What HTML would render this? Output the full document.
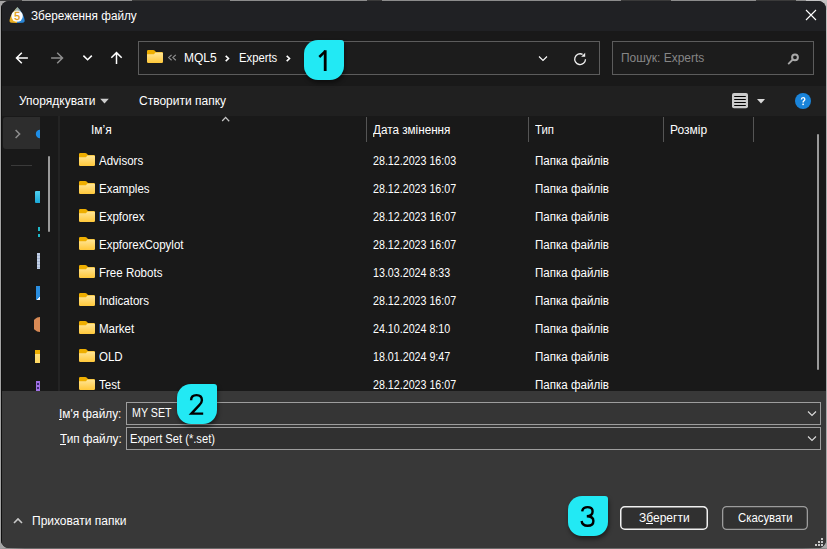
<!DOCTYPE html>
<html><head><meta charset="utf-8">
<style>
*{margin:0;padding:0;box-sizing:border-box}
html,body{width:827px;height:549px;overflow:hidden;background:#a5a5a5}
body{position:relative;font-family:"Liberation Sans",sans-serif;font-size:12px;color:#fff}
.a{position:absolute;display:block}
.t{position:absolute;white-space:nowrap;line-height:12px;transform-origin:0 0}
#win{position:absolute;left:0;top:0;width:827px;height:549px;clip-path:inset(1px 1px 1px 1px round 8px);background:#191919}
.badge{position:absolute;width:40px;height:40px;background:#22e9f4;border-radius:14px 3px 14px 14px;box-shadow:1px 3px 4px rgba(0,0,0,.45);color:#000;font-size:29px;line-height:40px;text-align:center;font-family:"Liberation Sans",sans-serif}
</style></head><body>
<svg width="0" height="0" style="position:absolute"><defs>
<linearGradient id="fg" x1="0" y1="0" x2="0" y2="1"><stop offset="0" stop-color="#ffe596"/><stop offset="1" stop-color="#ffc83a"/></linearGradient>
</defs></svg>
<div class="a" style="left:0;top:0;width:1px;height:549px;background:#a4a4a4"></div>
<div class="a" style="left:826px;top:0;width:1px;height:549px;background:linear-gradient(#c8c8c8,#b0b0b0 60px,#a8a8a8 300px,#a8a8a8)"></div>
<div class="a" style="left:0;top:548px;width:827px;height:1px;background:linear-gradient(90deg,#a0a0a0,#6a6a6a 3%,#6a6a6a 97%,#909090)"></div>
<div class="a" style="left:0;top:0;width:827px;height:1px;background:linear-gradient(90deg,#8c8c8c 0,#8c8c8c 0.00%,#3a3a3a 0.00%,#3a3a3a 2.66%,#8c8c8c 2.66%,#8c8c8c 15.96%,#3a3a3a 15.96%,#3a3a3a 27.81%,#8c8c8c 27.81%,#8c8c8c 44.38%,#3a3a3a 44.38%,#3a3a3a 46.19%,#8c8c8c 46.19%,#8c8c8c 75.09%,#3a3a3a 75.09%,#3a3a3a 81.14%,#8c8c8c 81.14%,#8c8c8c 91.41%,#3a3a3a 91.41%,#3a3a3a 96.25%,#8c8c8c 96.25%,#8c8c8c 100%)"></div>
<div class="a" style="left:806px;top:0;width:21px;height:10px;background:linear-gradient(#c4c4c4,#b4b4b4)"></div>
<div id="win">
<div class="a" style="left:0;top:0;width:827px;height:31px;background:#202124"></div>
<div class="a" style="left:0;top:31px;width:827px;height:55px;background:#191919"></div>
<div class="a" style="left:0;top:86px;width:827px;height:30px;background:#202020"></div>
<div class="a" style="left:0;top:116px;width:827px;height:275px;background:#191919"></div>
<div class="a" style="left:0;top:391px;width:827px;height:158px;background:#383838"></div>
<div class="a" style="left:1px;top:0;width:1px;height:549px;background:#0f0f0f"></div>
<svg class="a" style="left:6px;top:4px" width="22" height="22" viewBox="0 0 22 22">
<path d="M11.4 3.2 Q17.5 9 18.6 16 Q19 18.6 16.5 18.7 L11 18.9 Z" fill="#2a86d6"/>
<path d="M11.4 3.2 Q5 9 3.6 16 Q3.2 18.6 5.5 18.7 L11 18.9 Z" fill="#e9ae22"/>
<path d="M11.4 3 Q9 5.5 7.8 8 L15 8 Q13.8 5.5 11.4 3 Z" fill="#9fb2aa"/>
<circle cx="11.1" cy="12.1" r="5.7" fill="#fbfbfb"/>
<text x="11.1" y="15.7" font-family="Liberation Sans" font-size="10.5" fill="#e39c12" stroke="#e39c12" stroke-width="0.35" text-anchor="middle">5</text>
</svg>
<div class="t" style="left:31px;top:10px;color:#fff;font-size:12px;transform:scaleX(0.98);">Збереження файлу</div>
<svg class="a" style="left:805px;top:9px" width="12" height="12" viewBox="0 0 12 12"><path d="M1 1L11 11M11 1L1 11" stroke="#fff" stroke-width="1.1"/></svg>
<svg class="a" style="left:14px;top:50px" width="16" height="16" viewBox="0 0 16 16"><path d="M2.4 8H13.9M7.8 2.8L2.5 8L7.8 13.2" stroke="#fff" stroke-width="1.5" fill="none"/></svg>
<svg class="a" style="left:49px;top:50px" width="16" height="16" viewBox="0 0 16 16"><path d="M2.1 8H13.6M8.2 2.8L13.5 8L8.2 13.2" stroke="#8e8e8e" stroke-width="1.5" fill="none"/></svg>
<svg class="a" style="left:81px;top:52px" width="12" height="12" viewBox="0 0 12 12"><path d="M2.4 3.6L6.6 7.8L10.8 3.6" stroke="#fff" stroke-width="1.5" fill="none"/></svg>
<svg class="a" style="left:108px;top:50px" width="16" height="16" viewBox="0 0 16 16"><path d="M8.5 2.6V14M3.3 7.8L8.5 2.6L13.7 7.8" stroke="#fff" stroke-width="1.5" fill="none"/></svg>
<div class="a" style="left:138px;top:41px;width:462px;height:34px;border:1px solid #5c5c5c;background:#1c1c1c"></div>
<svg class="a" style="left:147px;top:50px" width="16" height="13" viewBox="0 0 16 13"><path d="M0 1.2Q0 0 1.2 0H6.3Q7 0 7.6 0.6L9 2H14.8Q16 2 16 3.2V8H0Z" fill="#eeae00"/><path d="M0 4.3H7L8.4 2.6H14.8Q16 2.6 16 3.8V11.8Q16 13 14.8 13H1.2Q0 13 0 11.8Z" fill="url(#fg)"/></svg>
<svg class="a" style="left:167px;top:53px" width="10" height="8" viewBox="0 0 10 8"><path d="M4.6 1.9L1.7 4.6L4.6 7.3M8.8 1.9L5.9 4.6L8.8 7.3" stroke="#909090" stroke-width="1.2" fill="none"/></svg>
<div class="t" style="left:184px;top:52px;color:#fff;font-size:12px;">MQL5</div>
<svg class="a" style="left:224px;top:53px" width="8" height="10" viewBox="0 0 8 10"><path d="M1.7 2.8L4.5 5.5L1.7 8.2" stroke="#fff" stroke-width="1.6" fill="none"/></svg>
<div class="t" style="left:239px;top:52px;color:#fff;font-size:12px;transform:scaleX(0.94);">Experts</div>
<svg class="a" style="left:285px;top:53px" width="8" height="10" viewBox="0 0 8 10"><path d="M1.7 2.8L4.5 5.5L1.7 8.2" stroke="#fff" stroke-width="1.6" fill="none"/></svg>
<svg class="a" style="left:537px;top:54px" width="12" height="10" viewBox="0 0 12 10"><path d="M2 2.5L6 6.5L10 2.5" stroke="#fff" stroke-width="1.1" fill="none"/></svg>
<svg class="a" style="left:572px;top:51px" width="16" height="16" viewBox="0 0 16 16"><path d="M13.5 8.3A5.4 5.4 0 1 1 10.6 3.4" stroke="#f0f0f0" stroke-width="1.3" fill="none"/><path d="M13.2 1.8V5.8H9.2Z" fill="#f0f0f0"/></svg>
<div class="a" style="left:612px;top:41px;width:202px;height:34px;border:1px solid #5c5c5c;background:#1c1c1c"></div>
<div class="t" style="left:621px;top:52px;color:#868686;font-size:12px;transform:scaleX(0.997);">Пошук: Experts</div>
<svg class="a" style="left:786px;top:51px" width="14" height="14" viewBox="0 0 14 14"><circle cx="9" cy="6.3" r="2.9" stroke="#a8a8a8" stroke-width="2" fill="none"/><path d="M6.8 8.5L2.2 13.1" stroke="#a8a8a8" stroke-width="1.8"/></svg>
<div class="t" style="left:19px;top:95px;color:#fff;font-size:12px;">Упорядкувати</div>
<svg class="a" style="left:99px;top:97px" width="11" height="8" viewBox="0 0 11 8"><path d="M1.2 1.8H9.8L5.5 6.6Z" fill="#cdcdcd"/></svg>
<div class="t" style="left:139px;top:95px;color:#fff;font-size:12px;">Створити папку</div>
<svg class="a" style="left:732px;top:93px" width="16" height="16" viewBox="0 0 16 16"><rect x="0" y="0" width="16" height="15.3" rx="2" fill="#cacaca"/><path d="M2.2 3.5H13.8M2.2 6.5H13.8M2.2 9.5H13.8M2.2 12.5H13.8" stroke="#000" stroke-width="1.2"/></svg>
<svg class="a" style="left:756px;top:97px" width="10" height="8" viewBox="0 0 10 8"><path d="M1 2H9L5 6.5Z" fill="#d8d8d8"/></svg>
<svg class="a" style="left:795px;top:93px" width="16" height="16" viewBox="0 0 16 16"><circle cx="8" cy="8" r="8" fill="#1a84da"/><path d="M6.4 6.4Q6.4 4.6 8.1 4.6Q9.8 4.6 9.8 6.2Q9.8 7.3 8.8 7.9Q8.1 8.4 8.1 9.6" stroke="#fff" stroke-width="1.4" fill="none"/><rect x="7.3" y="10.6" width="1.6" height="1.5" fill="#fff"/></svg>
<div class="a" style="left:3px;top:117px;width:37px;height:32px;background:#2d2d2d;border-radius:3px 0 0 3px"></div>
<svg class="a" style="left:13px;top:128px" width="10" height="12" viewBox="0 0 10 12"><path d="M2.6 2L6.6 6L2.6 10" stroke="#8e8e8e" stroke-width="1.5" fill="none"/></svg>
<svg class="a" style="left:34px;top:129px" width="6" height="10" viewBox="0 0 6 10"><circle cx="6" cy="5" r="4.2" fill="#1e8ee6"/></svg>
<div class="a" style="left:11px;top:165px;width:21px;height:1px;background:#3a3a3a"></div>
<div class="a" style="left:48px;top:156px;width:2px;height:76px;background:#9a9a9a;border-radius:1px"></div>
<div class="a" style="left:58px;top:116px;width:2px;height:275px;background:#232323"></div>
<div class="a" style="left:35px;top:191px;width:5px;height:12px;background:linear-gradient(#4fd0f0,#1aa8d8);border-radius:1px 0 0 1px"></div>
<div class="a" style="left:38px;top:227px;width:2px;height:4px;background:#1fb8c8"></div>
<div class="a" style="left:38px;top:234px;width:2px;height:3px;background:#1fb8c8"></div>
<div class="a" style="left:37px;top:253px;width:3px;height:16px;background:repeating-linear-gradient(#c0cee4 0,#c0cee4 2px,#a4b4d0 2px,#a4b4d0 3px)"></div>
<div class="a" style="left:36px;top:286px;width:4px;height:14px;background:linear-gradient(135deg,#2a8ee0 0,#2a8ee0 80%,#e8f0f8 80%)"></div>
<svg class="a" style="left:34px;top:317px" width="6" height="15" viewBox="0 0 6 15"><path d="M6 0A7.5 7.5 0 0 0 6 15Z" fill="#d88a55"/></svg>
<div class="a" style="left:35px;top:350px;width:5px;height:13px;background:linear-gradient(#f0b000 0,#f0b000 30%,#ffe080 30%,#ffd860)"></div>
<div class="a" style="left:36px;top:381px;width:4px;height:10px;background:#a070e4"></div>
<div class="a" style="left:37px;top:383px;width:2px;height:2px;background:#3a2a70"></div>
<div class="a" style="left:37px;top:387px;width:2px;height:2px;background:#3a2a70"></div>
<div class="t" style="left:91px;top:124px;color:#fff;font-size:12px;">Ім’я</div>
<svg class="a" style="left:220px;top:115px" width="12" height="8" viewBox="0 0 12 8"><path d="M2.2 6L5.6 2.4L9.2 6.2" stroke="#c4c4c4" stroke-width="1.3" fill="none"/></svg>
<div class="a" style="left:366px;top:117px;width:1px;height:25px;background:#555"></div>
<div class="a" style="left:528px;top:117px;width:1px;height:25px;background:#555"></div>
<div class="a" style="left:663px;top:117px;width:1px;height:25px;background:#555"></div>
<div class="a" style="left:753px;top:117px;width:1px;height:25px;background:#555"></div>
<div class="t" style="left:373px;top:124px;color:#fff;font-size:12px;transform:scaleX(0.975);">Дата змінення</div>
<div class="t" style="left:535px;top:124px;color:#fff;font-size:12px;transform:scaleX(0.95);">Тип</div>
<div class="t" style="left:670px;top:124px;color:#fff;font-size:12px;">Розмір</div>
<div class="a" style="left:817px;top:134px;width:2px;height:236px;background:#9a9a9a;border-radius:1px"></div>
<svg class="a" style="left:79px;top:153px" width="16" height="13" viewBox="0 0 16 13"><path d="M0 1.2Q0 0 1.2 0H6.3Q7 0 7.6 0.6L9 2H14.8Q16 2 16 3.2V8H0Z" fill="#eeae00"/><path d="M0 4.3H7L8.4 2.6H14.8Q16 2.6 16 3.8V11.8Q16 13 14.8 13H1.2Q0 13 0 11.8Z" fill="url(#fg)"/></svg>
<div class="t" style="left:99px;top:155px;color:#fff;font-size:12px;transform:scaleX(0.96);">Advisors</div>
<div class="t" style="left:373px;top:155px;color:#fff;font-size:12px;transform:scaleX(0.89);">28.12.2023 16:03</div>
<div class="t" style="left:535px;top:155px;color:#fff;font-size:12px;transform:scaleX(0.965);">Папка файлів</div>
<svg class="a" style="left:79px;top:181px" width="16" height="13" viewBox="0 0 16 13"><path d="M0 1.2Q0 0 1.2 0H6.3Q7 0 7.6 0.6L9 2H14.8Q16 2 16 3.2V8H0Z" fill="#eeae00"/><path d="M0 4.3H7L8.4 2.6H14.8Q16 2.6 16 3.8V11.8Q16 13 14.8 13H1.2Q0 13 0 11.8Z" fill="url(#fg)"/></svg>
<div class="t" style="left:99px;top:183px;color:#fff;font-size:12px;transform:scaleX(0.96);">Examples</div>
<div class="t" style="left:373px;top:183px;color:#fff;font-size:12px;transform:scaleX(0.89);">28.12.2023 16:07</div>
<div class="t" style="left:535px;top:183px;color:#fff;font-size:12px;transform:scaleX(0.965);">Папка файлів</div>
<svg class="a" style="left:79px;top:209px" width="16" height="13" viewBox="0 0 16 13"><path d="M0 1.2Q0 0 1.2 0H6.3Q7 0 7.6 0.6L9 2H14.8Q16 2 16 3.2V8H0Z" fill="#eeae00"/><path d="M0 4.3H7L8.4 2.6H14.8Q16 2.6 16 3.8V11.8Q16 13 14.8 13H1.2Q0 13 0 11.8Z" fill="url(#fg)"/></svg>
<div class="t" style="left:99px;top:211px;color:#fff;font-size:12px;transform:scaleX(0.96);">Expforex</div>
<div class="t" style="left:373px;top:211px;color:#fff;font-size:12px;transform:scaleX(0.89);">28.12.2023 16:07</div>
<div class="t" style="left:535px;top:211px;color:#fff;font-size:12px;transform:scaleX(0.965);">Папка файлів</div>
<svg class="a" style="left:79px;top:237px" width="16" height="13" viewBox="0 0 16 13"><path d="M0 1.2Q0 0 1.2 0H6.3Q7 0 7.6 0.6L9 2H14.8Q16 2 16 3.2V8H0Z" fill="#eeae00"/><path d="M0 4.3H7L8.4 2.6H14.8Q16 2.6 16 3.8V11.8Q16 13 14.8 13H1.2Q0 13 0 11.8Z" fill="url(#fg)"/></svg>
<div class="t" style="left:99px;top:239px;color:#fff;font-size:12px;transform:scaleX(0.96);">ExpforexCopylot</div>
<div class="t" style="left:373px;top:239px;color:#fff;font-size:12px;transform:scaleX(0.89);">28.12.2023 16:07</div>
<div class="t" style="left:535px;top:239px;color:#fff;font-size:12px;transform:scaleX(0.965);">Папка файлів</div>
<svg class="a" style="left:79px;top:265px" width="16" height="13" viewBox="0 0 16 13"><path d="M0 1.2Q0 0 1.2 0H6.3Q7 0 7.6 0.6L9 2H14.8Q16 2 16 3.2V8H0Z" fill="#eeae00"/><path d="M0 4.3H7L8.4 2.6H14.8Q16 2.6 16 3.8V11.8Q16 13 14.8 13H1.2Q0 13 0 11.8Z" fill="url(#fg)"/></svg>
<div class="t" style="left:99px;top:267px;color:#fff;font-size:12px;transform:scaleX(0.96);">Free Robots</div>
<div class="t" style="left:373px;top:267px;color:#fff;font-size:12px;transform:scaleX(0.89);">13.03.2024 8:33</div>
<div class="t" style="left:535px;top:267px;color:#fff;font-size:12px;transform:scaleX(0.965);">Папка файлів</div>
<svg class="a" style="left:79px;top:293px" width="16" height="13" viewBox="0 0 16 13"><path d="M0 1.2Q0 0 1.2 0H6.3Q7 0 7.6 0.6L9 2H14.8Q16 2 16 3.2V8H0Z" fill="#eeae00"/><path d="M0 4.3H7L8.4 2.6H14.8Q16 2.6 16 3.8V11.8Q16 13 14.8 13H1.2Q0 13 0 11.8Z" fill="url(#fg)"/></svg>
<div class="t" style="left:99px;top:295px;color:#fff;font-size:12px;transform:scaleX(0.96);">Indicators</div>
<div class="t" style="left:373px;top:295px;color:#fff;font-size:12px;transform:scaleX(0.89);">28.12.2023 16:07</div>
<div class="t" style="left:535px;top:295px;color:#fff;font-size:12px;transform:scaleX(0.965);">Папка файлів</div>
<svg class="a" style="left:79px;top:321px" width="16" height="13" viewBox="0 0 16 13"><path d="M0 1.2Q0 0 1.2 0H6.3Q7 0 7.6 0.6L9 2H14.8Q16 2 16 3.2V8H0Z" fill="#eeae00"/><path d="M0 4.3H7L8.4 2.6H14.8Q16 2.6 16 3.8V11.8Q16 13 14.8 13H1.2Q0 13 0 11.8Z" fill="url(#fg)"/></svg>
<div class="t" style="left:99px;top:323px;color:#fff;font-size:12px;transform:scaleX(0.96);">Market</div>
<div class="t" style="left:373px;top:323px;color:#fff;font-size:12px;transform:scaleX(0.89);">24.10.2024 8:10</div>
<div class="t" style="left:535px;top:323px;color:#fff;font-size:12px;transform:scaleX(0.965);">Папка файлів</div>
<svg class="a" style="left:79px;top:349px" width="16" height="13" viewBox="0 0 16 13"><path d="M0 1.2Q0 0 1.2 0H6.3Q7 0 7.6 0.6L9 2H14.8Q16 2 16 3.2V8H0Z" fill="#eeae00"/><path d="M0 4.3H7L8.4 2.6H14.8Q16 2.6 16 3.8V11.8Q16 13 14.8 13H1.2Q0 13 0 11.8Z" fill="url(#fg)"/></svg>
<div class="t" style="left:99px;top:351px;color:#fff;font-size:12px;transform:scaleX(0.96);">OLD</div>
<div class="t" style="left:373px;top:351px;color:#fff;font-size:12px;transform:scaleX(0.89);">18.01.2024 9:47</div>
<div class="t" style="left:535px;top:351px;color:#fff;font-size:12px;transform:scaleX(0.965);">Папка файлів</div>
<svg class="a" style="left:79px;top:377px" width="16" height="13" viewBox="0 0 16 13"><path d="M0 1.2Q0 0 1.2 0H6.3Q7 0 7.6 0.6L9 2H14.8Q16 2 16 3.2V8H0Z" fill="#eeae00"/><path d="M0 4.3H7L8.4 2.6H14.8Q16 2.6 16 3.8V11.8Q16 13 14.8 13H1.2Q0 13 0 11.8Z" fill="url(#fg)"/></svg>
<div class="t" style="left:99px;top:379px;color:#fff;font-size:12px;transform:scaleX(0.96);">Test</div>
<div class="t" style="left:373px;top:379px;color:#fff;font-size:12px;transform:scaleX(0.89);">28.12.2023 16:07</div>
<div class="t" style="left:535px;top:379px;color:#fff;font-size:12px;transform:scaleX(0.965);">Папка файлів</div>
<div class="t" style="left:59px;top:408px;color:#fff;font-size:12px;transform:scaleX(0.985);">Ім'я файлу:</div>
<div class="a" style="left:59px;top:419px;width:3px;height:1px;background:#fff"></div>
<div class="a" style="left:126px;top:402px;width:695px;height:23px;border:1px solid #9d9d9d;background:#353535"></div>
<div class="t" style="left:132px;top:407px;color:#fff;font-size:12px;transform:scaleX(0.89);">MY SET</div>
<svg class="a" style="left:806px;top:409px" width="12" height="10" viewBox="0 0 12 10"><path d="M2 2.5L6 6.5L10 2.5" stroke="#dcdcdc" stroke-width="1.1" fill="none"/></svg>
<div class="t" style="left:60px;top:433px;color:#fff;font-size:12px;transform:scaleX(0.98);">Тип файлу:</div>
<div class="a" style="left:60px;top:444px;width:6px;height:1px;background:#fff"></div>
<div class="a" style="left:126px;top:427px;width:695px;height:23px;border:1px solid #9d9d9d;background:#303030"></div>
<div class="t" style="left:130px;top:433px;color:#fff;font-size:12px;transform:scaleX(0.93);">Expert Set (*.set)</div>
<svg class="a" style="left:806px;top:434px" width="12" height="10" viewBox="0 0 12 10"><path d="M2 2.5L6 6.5L10 2.5" stroke="#dcdcdc" stroke-width="1.1" fill="none"/></svg>
<svg class="a" style="left:12px;top:515px" width="12" height="12" viewBox="0 0 12 12"><path d="M2 8L6 4L10 8" stroke="#c8c8c8" stroke-width="1.6" fill="none"/></svg>
<div class="t" style="left:32px;top:515px;color:#fff;font-size:12px;">Приховати папки</div>
<svg class="a" style="left:620px;top:506px" width="88" height="24" viewBox="0 0 88 24"><rect x="0.75" y="0.75" width="86.5" height="22.5" rx="4" fill="#303030" stroke="#f0f0f0" stroke-width="1.5"/></svg>
<div class="t" style="left:639px;top:512px;color:#fff;font-size:12px;">Зберегти</div>
<div class="a" style="left:646px;top:523px;width:7px;height:1px;background:#fff"></div>
<svg class="a" style="left:722px;top:506px" width="86" height="24" viewBox="0 0 86 24"><rect x="0.65" y="0.65" width="84.7" height="22.7" rx="4" fill="#313131" stroke="#9c9c9c" stroke-width="1.3"/></svg>
<div class="t" style="left:738px;top:512px;color:#fff;font-size:12px;transform:scaleX(0.945);">Скасувати</div>
<div class="a" style="left:821px;top:538px;width:2px;height:2px;background:#c8c8c8"></div>
<div class="a" style="left:818px;top:541px;width:2px;height:2px;background:#c8c8c8"></div>
<div class="a" style="left:821px;top:541px;width:2px;height:2px;background:#c8c8c8"></div>
<div class="a" style="left:815px;top:544px;width:2px;height:2px;background:#c8c8c8"></div>
<div class="a" style="left:818px;top:544px;width:2px;height:2px;background:#c8c8c8"></div>
<div class="a" style="left:821px;top:544px;width:2px;height:2px;background:#c8c8c8"></div>
<div class="badge" style="left:304px;top:40px"><svg width="40" height="40" viewBox="0 0 40 40" style="display:block"><path d="M21.2 10.2V31" stroke="#000" stroke-width="2.8" fill="none"/><path d="M21.4 11.2L15.3 17" stroke="#000" stroke-width="2.5" fill="none"/></svg></div>
<div class="badge" style="left:177px;top:384px"><svg width="40" height="40" viewBox="0 0 40 40" style="display:block"><path d="M14.1 16.2Q14.1 11.1 19.5 11.1Q24.9 11.1 24.9 16.2Q24.9 18.6 22.3 21.2L14.4 29.6H26.2" stroke="#000" stroke-width="2.4" fill="none" stroke-linejoin="miter"/></svg></div>
<div class="badge" style="left:568px;top:496px"><svg width="40" height="40" viewBox="0 0 40 40" style="display:block"><path d="M14.2 15.3Q14.8 11.1 19.6 11.1Q24.6 11.1 24.6 15.6Q24.6 20.1 18.8 20.3Q25.4 20.3 25.4 25Q25.4 29.8 19.6 29.8Q14.3 29.8 13.6 25" stroke="#000" stroke-width="2.4" fill="none"/></svg></div>
</div>
</body></html>
